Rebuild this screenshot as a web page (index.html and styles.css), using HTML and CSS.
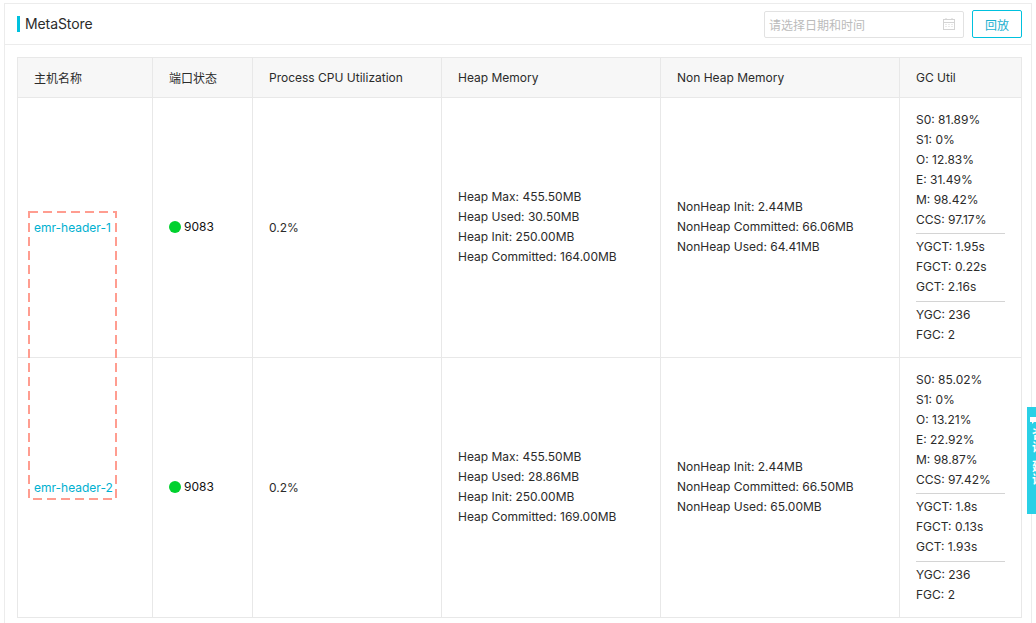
FILE: index.html
```html
<!DOCTYPE html>
<html lang="zh">
<head>
<meta charset="utf-8">
<title>MetaStore</title>
<link rel="stylesheet" href="styles.css">
</head>
<body>
<section class="panel">
  <header class="panel-head">
    <h2 class="panel-title">MetaStore</h2>
    <div class="tools">
      <div class="date-input">
        <span class="placeholder">请选择日期和时间</span>
        <svg class="cal" width="12" height="12" viewBox="0 0 12 12" fill="none" stroke="#d4d4d4" stroke-width="1"><rect x="0.5" y="1.5" width="11" height="10"/><path d="M0.5 4.5h11M3 0v2M9 0v2M2.5 6.5h1M5.5 6.5h1M8.5 6.5h1M2.5 8.5h1M5.5 8.5h1M8.5 8.5h1"/></svg>
      </div>
      <button class="replay" type="button">回放</button>
    </div>
  </header>
  <div class="panel-body">
    <table class="grid">
      <colgroup>
        <col class="c1"><col class="c2"><col class="c3"><col class="c4"><col class="c5"><col class="c6">
      </colgroup>
      <thead>
        <tr><th>主机名称</th><th>端口状态</th><th>Process CPU Utilization</th><th>Heap Memory</th><th>Non Heap Memory</th><th>GC Util</th></tr>
      </thead>
      <tbody>
        <tr>
          <td><a class="host">emr-header-1</a></td>
          <td><span class="port"><i class="dot"></i>9083</span></td>
          <td>0.2%</td>
          <td class="stack"><p>Heap Max: 455.50MB</p><p>Heap Used: 30.50MB</p><p>Heap Init: 250.00MB</p><p>Heap Committed: 164.00MB</p></td>
          <td class="stack"><p>NonHeap Init: 2.44MB</p><p>NonHeap Committed: 66.06MB</p><p>NonHeap Used: 64.41MB</p></td>
          <td>
            <div class="gc"><p>S0: 81.89%</p><p>S1: 0%</p><p>O: 12.83%</p><p>E: 31.49%</p><p>M: 98.42%</p><p>CCS: 97.17%</p></div>
            <div class="gc"><p>YGCT: 1.95s</p><p>FGCT: 0.22s</p><p>GCT: 2.16s</p></div>
            <div class="gc"><p>YGC: 236</p><p>FGC: 2</p></div>
          </td>
        </tr>
        <tr>
          <td><a class="host">emr-header-2</a></td>
          <td><span class="port"><i class="dot"></i>9083</span></td>
          <td>0.2%</td>
          <td class="stack"><p>Heap Max: 455.50MB</p><p>Heap Used: 28.86MB</p><p>Heap Init: 250.00MB</p><p>Heap Committed: 169.00MB</p></td>
          <td class="stack"><p>NonHeap Init: 2.44MB</p><p>NonHeap Committed: 66.50MB</p><p>NonHeap Used: 65.00MB</p></td>
          <td>
            <div class="gc"><p>S0: 85.02%</p><p>S1: 0%</p><p>O: 13.21%</p><p>E: 22.92%</p><p>M: 98.87%</p><p>CCS: 97.42%</p></div>
            <div class="gc"><p>YGCT: 1.8s</p><p>FGCT: 0.13s</p><p>GCT: 1.93s</p></div>
            <div class="gc"><p>YGC: 236</p><p>FGC: 2</p></div>
          </td>
        </tr>
      </tbody>
    </table>
    <svg class="marker" width="89" height="289" viewBox="0 0 89 289" fill="none"><rect x="1" y="1" width="87" height="287" stroke="#ff9d90" stroke-width="2" stroke-dasharray="9 5"/></svg>
  </div>
</section>
<aside class="float-tab">
  <svg class="float-icon" width="9" height="7" viewBox="0 0 9 7"><path d="M0 0h9v5H4L2 7V5H0z" fill="#fff"/></svg>
  <span class="float-text">咨询</span>
  <span class="float-text">建议</span>
</aside>
</body>
</html>
```
FILE: styles.css
```css
* { box-sizing: border-box; }
html, body { margin: 0; padding: 0; }
body {
  width: 1036px;
  height: 623px;
  overflow: hidden;
  background: #fff;
  font-family: Inter, "Noto Sans CJK SC", sans-serif;
  font-size: 12px;
  color: #2b2b2b;
  padding: 3px 4px 0 4px;
}
p { margin: 0; line-height: 20px; }
.panel {
  height: 620px;
  border: solid #ececec;
  border-width: 1px 1px 0 1px;
}
.panel-head {
  height: 41px;
  border-bottom: 1px solid #ececec;
  display: flex;
  align-items: center;
  justify-content: space-between;
  padding: 0 9px 0 12px;
}
.panel-title {
  margin: 0;
  border-left: 3px solid #00c1de;
  padding-left: 5px;
  font-size: 14px;
  line-height: 16px;
  font-weight: 400;
  letter-spacing: -0.1px;
  color: #2b2b2b;
}
.tools { display: flex; align-items: center; gap: 8px; }
.date-input {
  width: 200px;
  height: 27px;
  border: 1px solid #e2e2e2;
  border-radius: 2px;
  display: flex;
  align-items: center;
  justify-content: space-between;
  padding: 0 8px 0 4px;
}
.placeholder { color: #bbb; }
.replay {
  width: 50px;
  height: 28px;
  border: 1px solid #00c1de;
  border-radius: 2px;
  background: #fff;
  color: #1cb0cf;
  font: inherit;
  padding: 0;
}
.panel-body { position: relative; padding: 12px 9px 0 12px; }
.grid {
  width: 1004px;
  table-layout: fixed;
  border-collapse: collapse;
  border: 1px solid #e8e8e8;
}
.c1 { width: 135px; }
.c2 { width: 100px; }
.c3 { width: 189px; }
.c4 { width: 219px; }
.c5 { width: 239px; }
.c6 { width: 122px; }
th, td {
  border: 1px solid #e8e8e8;
  padding: 0 16px;
  text-align: left;
  font-weight: 400;
}
th { height: 40px; background: #f7f7f7; }
td { height: 260px; }
td.stack { padding-bottom: 2px; }
.host { color: #00b0d0; }
.port { display: inline-flex; align-items: center; gap: 3px; color: #111; }
.dot { width: 12px; height: 12px; border-radius: 50%; background: #00d12e; }
.gc { border-top: 1px solid #d4d4d4; padding: 3px 0 4px; }
.gc:first-child { border-top: 0; padding: 0 0 3px; }
.gc:last-child { padding-bottom: 1px; }
.marker {
  position: absolute;
  left: 23px;
  top: 166px;
  pointer-events: none;
}
.float-tab {
  position: fixed;
  left: 1027px;
  top: 407px;
  width: 24px;
  height: 107px;
  background: #2ad0e6;
  color: #fff;
  padding: 10px 0 0 3px;
}
.float-icon { display: block; margin-bottom: 4px; }
.float-text {
  display: block;
  width: 12px;
  margin: 0 0 6px 2px;
  font-size: 12px;
  line-height: 13px;
  font-weight: 700;
}
```
